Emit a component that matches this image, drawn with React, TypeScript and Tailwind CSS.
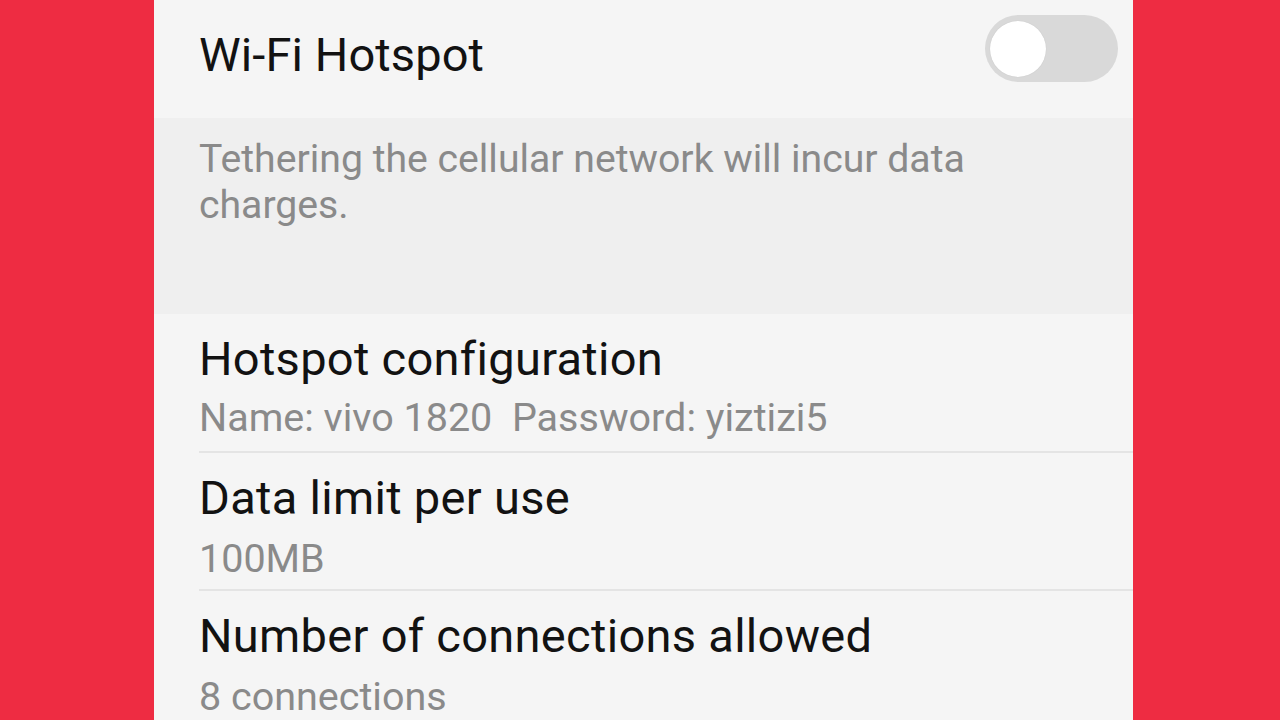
import React from "react";

const rows = [
  {
    title: "Hotspot configuration",
    sub: "Name: vivo 1820\u00a0\u00a0Password: yiztizi5",
    subCls: "mt-[9px]",
    padCls: "pb-[10px]",
    divider: true,
  },
  {
    title: "Data limit per use",
    sub: "100MB",
    subCls: "mt-[11px]",
    padCls: "pb-[7px]",
    divider: true,
  },
  {
    title: "Number of connections allowed",
    sub: "8 connections",
    subCls: "mt-[11px]",
    padCls: "pb-[10px]",
    divider: false,
  },
];

export default function App() {
  return (
    <div
      className="w-[1280px] h-[720px] overflow-hidden bg-[#ee2c42] flex"
      style={{ fontFamily: "Roboto, 'Noto Sans', Arial, sans-serif" }}
    >
      <div className="ml-[154px] w-[979px] h-full bg-[#f5f5f5] flex flex-col">
        {/* Top row */}
        <div className="h-[118px] shrink-0 flex items-start justify-between pl-[45px] pr-[15px]">
          <div className="mt-[28px] text-[47px] leading-[54px] text-[#121212] tracking-[0.1px]">
            Wi-Fi Hotspot
          </div>
          <div className="mt-[15px] w-[133px] h-[67px] rounded-full bg-[#d9d9d9] flex items-center pl-[5px]">
            <div className="w-[56px] h-[56px] rounded-full bg-white shadow-[0_0_1px_rgba(0,0,0,0.15)]" />
          </div>
        </div>

        {/* Info band */}
        <div className="h-[196px] shrink-0 bg-[#efefef] pl-[45px] pr-[150px] pt-[18px]">
          <p className="text-[39.2px] leading-[46px] text-[#8a8a8a]">
            Tethering the cellular network will incur data charges.
          </p>
        </div>

        {/* Rows */}
        <div className="flex flex-col">
          {rows.map((r) => (
            <div key={r.title} className="pl-[45px]">
              <div className={"pt-[18px] " + r.padCls}>
                <div className="text-[47px] leading-[54px] tracking-[0.3px] text-[#121212]">{r.title}</div>
                <div className={"text-[39.5px] leading-[46px] text-[#8a8a8a] " + r.subCls}>{r.sub}</div>
              </div>
              {r.divider && <div className="h-[2px] bg-[#e4e4e4]" />}
            </div>
          ))}
        </div>
      </div>
    </div>
  );
}
